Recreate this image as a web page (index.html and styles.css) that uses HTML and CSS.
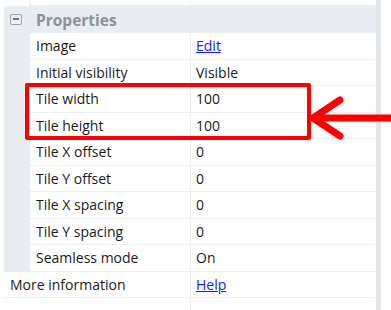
FILE: index.html
```html
<!DOCTYPE html>
<html lang="en">
<head>
  <meta charset="UTF-8" />
  <title>Properties</title>
  <link rel="stylesheet" href="styles.css">
</head>
<body>

  <div class="panel">
    <div class="grid">
      <div class="row top">
        <div class="gutter"></div>
        <div class="name"></div>
        <div class="value"></div>
      </div>

      <div class="row header">
        <span class="toggle"></span>
        <span class="title">Properties</span>
      </div>

      <div class="row"><div class="gutter"></div><div class="name">Image</div><div class="value"><a href="#">Edit</a></div></div>
      <div class="row"><div class="gutter"></div><div class="name">Initial visibility</div><div class="value">Visible</div></div>
      <div class="row"><div class="gutter"></div><div class="name">Tile width</div><div class="value">100</div></div>
      <div class="row"><div class="gutter"></div><div class="name">Tile height</div><div class="value">100</div></div>
      <div class="row"><div class="gutter"></div><div class="name">Tile X offset</div><div class="value">0</div></div>
      <div class="row"><div class="gutter"></div><div class="name">Tile Y offset</div><div class="value">0</div></div>
      <div class="row"><div class="gutter"></div><div class="name">Tile X spacing</div><div class="value">0</div></div>
      <div class="row"><div class="gutter"></div><div class="name">Tile Y spacing</div><div class="value">0</div></div>
      <div class="row"><div class="gutter"></div><div class="name">Seamless mode</div><div class="value">On</div></div>

      <div class="row outer"><div class="name wide">More information</div><div class="value"><a href="#">Help</a></div></div>

      <div class="row filler">
        <div class="name wide"></div>
        <div class="value"></div>
      </div>
    </div>

    <div class="scrollbar"></div>

    <!-- annotation drawn over the grid -->
    <div class="highlight"></div>
    <svg class="arrow" width="82" height="46" viewBox="0 0 82 46">
      <path d="M4 23 H82" stroke="#ff0000" stroke-width="7" fill="none"/>
      <path d="M31 5 L4 23 L31 41" stroke="#ff0000" stroke-width="7" fill="none" stroke-linecap="round" stroke-linejoin="round"/>
    </svg>
  </div>

</body>
</html>
```

FILE: styles.css
```css
* {
  box-sizing: border-box;
}

body {
  margin: 0;
  background: #ffffff;
  font-family: 'Open Sans', 'Noto Sans', sans-serif;
  font-size: 14px;
  color: #1a1a1a;
}

.panel {
  position: relative;
  display: flex;
  width: 391px;
  height: 310px;
  padding-left: 4px;
  overflow: hidden;
}

.grid {
  width: 372px;
  display: flex;
  flex-direction: column;
}

.row {
  display: grid;
  grid-template-columns: 26px 160px 1fr;
  height: 26.5px;
}

.row .gutter {
  background: #e9ecf0;
}

.row .name {
  display: flex;
  align-items: center;
  padding-left: 6px;
  border-bottom: 1px solid #eceef2;
  white-space: nowrap;
}

.row .value {
  display: flex;
  align-items: center;
  padding-left: 5px;
  border-bottom: 1px solid #eceef2;
  border-left: 1px solid #eceef2;
}

.row .name.wide {
  grid-column: 1 / 3;
}

.row.top {
  height: 6px;
}

.row.top .gutter {
  background: #ffffff;
  border-right: 1px solid #eceef2;
}

.row.header {
  display: flex;
  align-items: center;
  height: 27px;
  background: #e9ecf0;
}

.toggle {
  position: relative;
  width: 12px;
  height: 11px;
  margin-left: 6px;
  border: 1px solid #9ba1a8;
  border-radius: 2px;
  background: #eef0f3;
}

.toggle::after {
  content: "";
  position: absolute;
  left: 2px;
  top: 3px;
  width: 6px;
  height: 2px;
  background: #6a7078;
}

.title {
  margin-left: 14px;
  font-weight: bold;
  font-size: 15.5px;
  color: #8d9299;
}

.row.filler {
  flex: 1;
}

.row.filler .name,
.row.filler .value {
  border-bottom: none;
}

a {
  color: #1a1aff;
  text-decoration: underline;
}

.scrollbar {
  width: 5px;
  background: #e1e4e8;
}

.highlight {
  position: absolute;
  left: 25px;
  top: 83px;
  width: 286px;
  height: 57px;
  border: 4px solid #ff0000;
  border-radius: 2px;
}

.arrow {
  position: absolute;
  left: 309px;
  top: 95px;
}
```
